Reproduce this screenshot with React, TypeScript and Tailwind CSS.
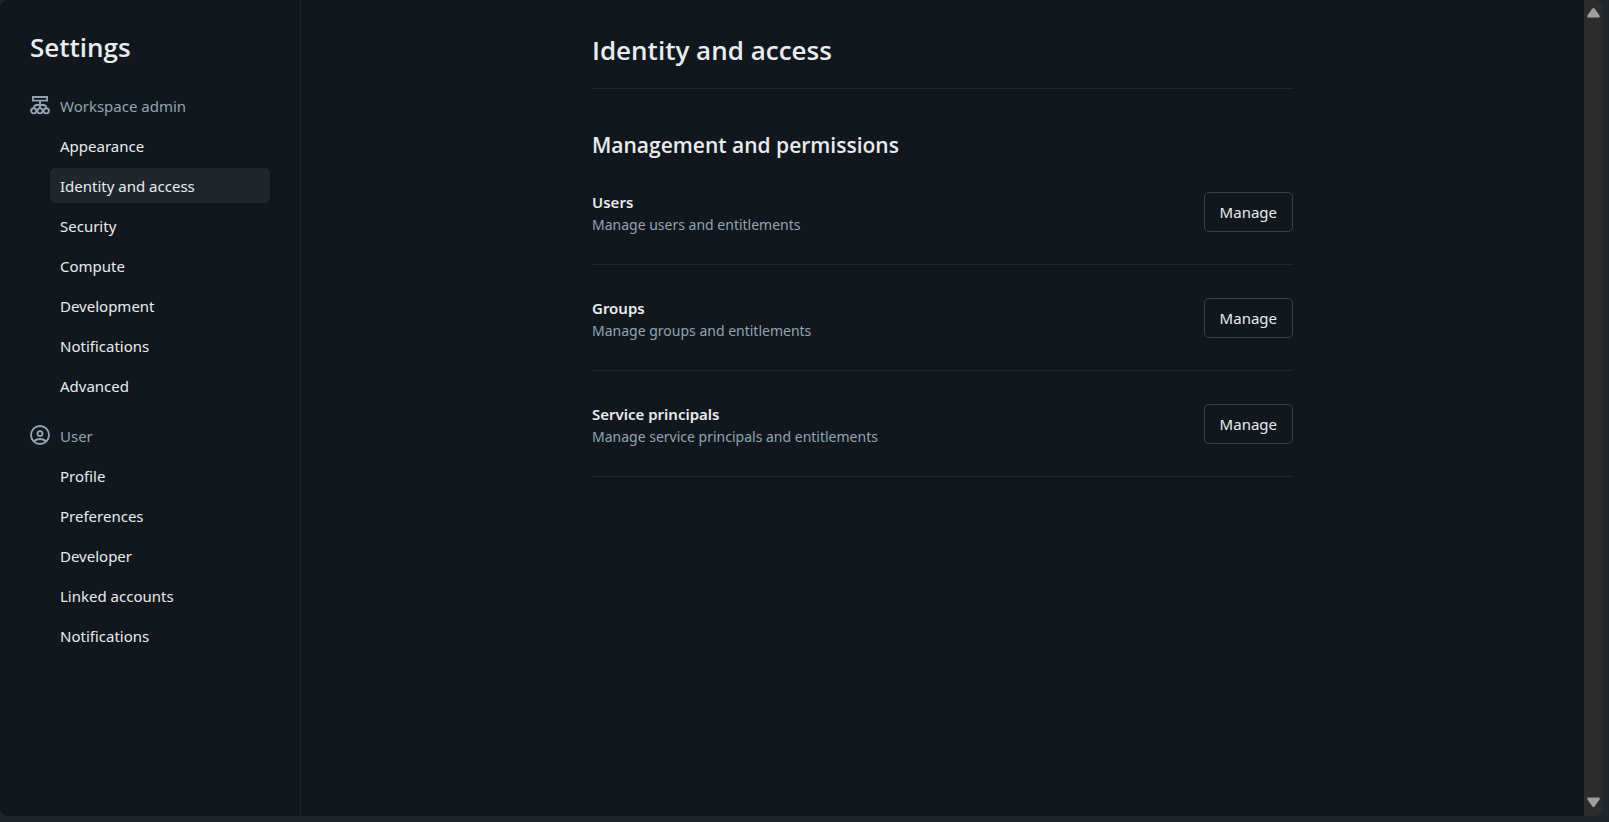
import { useState, type ReactNode } from "react";

type Section = { title: string; icon: ReactNode; items: string[] };

function WorkspaceIcon() {
  return (
    <svg viewBox="0 0 20 20" className="size-5" fill="none" stroke="currentColor" strokeWidth="1.9" aria-hidden="true">
      <path d="M2.9 2h14.2v3.6H2.9z" />
      <path d="M10 5.5v7.500M3.800 13a3 3 0 0 1 3-3h6.400a3 3 0 0 1 3 3" />
      <circle cx="3.7" cy="15.800" r="2.600" />
      <circle cx="10" cy="15.800" r="2.600" />
      <circle cx="16.3" cy="15.800" r="2.600" />
    </svg>
  );
}

function UserIcon() {
  return (
    <svg viewBox="0 0 20 20" className="size-5" fill="none" stroke="currentColor" strokeWidth="1.9" aria-hidden="true">
      <circle cx="10" cy="10" r="9" />
      <circle cx="10" cy="8.6" r="2.5" />
      <path d="M3.9 16.2a9.6 9.6 0 0 1 12.2 0" />
    </svg>
  );
}

const sections: Section[] = [
  {
    title: "Workspace admin",
    icon: <WorkspaceIcon />,
    items: ["Appearance", "Identity and access", "Security", "Compute", "Development", "Notifications", "Advanced"],
  },
  {
    title: "User",
    icon: <UserIcon />,
    items: ["Profile", "Preferences", "Developer", "Linked accounts", "Notifications"],
  },
];

const permissions = [
  { title: "Users", text: "Manage users and entitlements" },
  { title: "Groups", text: "Manage groups and entitlements" },
  { title: "Service principals", text: "Manage service principals and entitlements" },
];

export default function App() {
  const [active, setActive] = useState("Workspace admin/Identity and access");

  return (
    <div className="flex h-screen bg-[#1f272d] pr-[6px] pb-[6px] font-['Noto_Sans','Open_Sans',sans-serif] text-[#e8ecf0]">
      <div className="flex min-w-0 flex-1 overflow-hidden rounded-lg bg-[#11171c]">
        <aside className="w-[301px] shrink-0 border-r border-[#1f272d] px-[30px] pt-[27px]">
          <p className="font-['Open_Sans','Noto_Sans',sans-serif] text-[26px] leading-10 font-semibold">Settings</p>
          <nav aria-label="Settings" className="mt-[21px] flex flex-col gap-[15px] text-[15px]">
            {sections.map((section) => (
              <section key={section.title}>
                <h2 className="flex h-[35px] items-center gap-[10px] text-[#92a4b3]">
                  <span className="pb-0.5">{section.icon}</span>
                  <span className="pt-0.5">{section.title}</span>
                </h2>
                <ul className="mt-[5px] ml-5 flex flex-col gap-[5px]">
                  {section.items.map((item) => {
                    const id = `${section.title}/${item}`;
                    return (
                      <li key={item}>
                        <a
                          href="#"
                          aria-current={active === id ? "page" : undefined}
                          onClick={(event) => {
                            event.preventDefault();
                            setActive(id);
                          }}
                          className={
                            active === id
                              ? "flex h-[35px] items-center rounded-[5px] bg-[#1f272d] px-[10px] pt-0.5"
                              : "flex h-[35px] items-center rounded-[5px] px-[10px] pt-0.5 hover:bg-[#1f272d]"
                          }
                        >
                          {item}
                        </a>
                      </li>
                    );
                  })}
                </ul>
              </section>
            ))}
          </nav>
        </aside>

        <main className="min-w-0 flex-1 px-8 pt-[30px]">
          <div className="mx-auto max-w-[701px]">
            <h1 className="border-b border-[#1f272d] pb-[18px] font-['Open_Sans','Noto_Sans',sans-serif] text-[26px] leading-10 font-semibold">
              Identity and access
            </h1>
            <h2 className="mt-[42px] font-['Open_Sans','Noto_Sans',sans-serif] text-[21px] leading-7 font-semibold">
              Management and permissions
            </h2>
            <ul>
              {permissions.map((row) => (
                <li key={row.title} className="flex items-end justify-between border-b border-[#1f272d] pt-[32px] pb-[28px]">
                  <div>
                    <h3 className="text-[15px] leading-[23px] font-semibold">{row.title}</h3>
                    <p className="text-[14px] leading-[22px] text-[#92a4b3]">{row.text}</p>
                  </div>
                  <button
                    type="button"
                    aria-label={`Manage ${row.title}`}
                    className="mb-1 h-10 rounded-[5px] border border-[#37444f] px-[15px] text-[15px]"
                  >
                    Manage
                  </button>
                </li>
              ))}
            </ul>
          </div>
        </main>

        <div aria-hidden="true" className="flex w-[19px] shrink-0 flex-col items-center justify-between bg-[#2c2c2c] pt-2 pb-[9px] text-[#9f9f9f]">
          <svg viewBox="0 0 13 10" className="h-[10px] w-[13px]" fill="currentColor">
            <path d="M5.4.6a1.5 1.5 0 0 1 2.2 0l4.8 6.6c.8 1.2.2 2.3-1.1 2.3H1.7C.4 9.5-.2 8.4.6 7.2z" />
          </svg>
          <svg viewBox="0 0 13 10" className="h-[10px] w-[13px]" fill="currentColor">
            <path d="M5.4 9.4a1.5 1.5 0 0 0 2.2 0l4.8-6.6C13.2 1.6 12.6.5 11.3.5H1.7C.4.5-.2 1.6.6 2.8z" />
          </svg>
        </div>
      </div>
    </div>
  );
}
